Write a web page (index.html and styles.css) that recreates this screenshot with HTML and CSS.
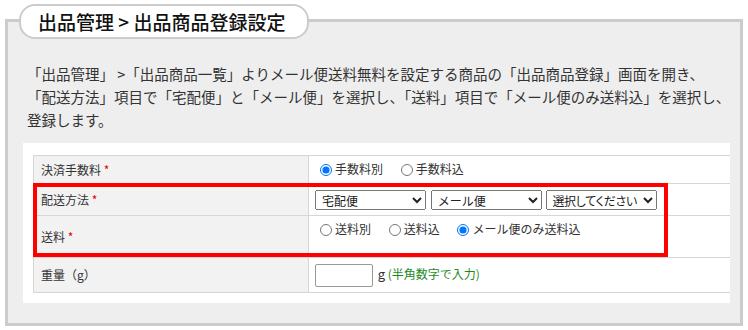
FILE: index.html
```html
<!doctype html>
<html>
<head>
    <meta charset="utf-8">
    <title>出品商品登録設定</title>
    <link rel="stylesheet" href="styles.css">
</head>
<body>
    <div class="frame">
        <h1 class="frame-title">出品管理 &gt; 出品商品登録設定</h1>
        <p class="lead">
            「出品管理」 &gt;「出品商品一覧」よりメール便送料無料を設定する商品の「出品商品登録」画面を開き、<br>
            「配送方法」項目で「宅配便」と「メール便」を選択し、「送料」項目で「メール便のみ送料込」を選択し、<br>
            登録します。
        </p>
        <div class="panel">
            <table class="form-table">
                <tr class="row-fee">
                    <th>決済手数料 <span class="req">*</span></th>
                    <td>
                        <label class="opt"><input type="radio" name="fee" checked>手数料別</label>
                        <label class="opt"><input type="radio" name="fee">手数料込</label>
                    </td>
                </tr>
                <tr class="row-method">
                    <th>配送方法 <span class="req">*</span></th>
                    <td>
                        <select class="pick"><option>宅配便</option></select>
                        <select class="pick"><option>メール便</option></select>
                        <select class="pick pick-tight"><option>選択してください</option></select>
                    </td>
                </tr>
                <tr class="row-postage">
                    <th>送料 <span class="req">*</span></th>
                    <td>
                        <label class="opt"><input type="radio" name="postage">送料別</label>
                        <label class="opt"><input type="radio" name="postage">送料込</label>
                        <label class="opt"><input type="radio" name="postage" checked>メール便のみ送料込</label>
                    </td>
                </tr>
                <tr class="row-weight">
                    <th>重量（g）</th>
                    <td>
                        <input type="text" class="weight-input">
                        <span class="unit">g</span>
                        <span class="note">(半角数字で入力)</span>
                    </td>
                </tr>
            </table>
            <!-- annotation box over the shipping rows -->
            <div class="highlight"></div>
        </div>
    </div>
</body>
</html>
```

FILE: styles.css
```css
body {
    margin: 0;
    background: #fff;
    color: #333;
    font-family: "Noto Sans CJK JP", sans-serif;
}
.frame {
    margin: 19px 5px 0 5px;
    height: 301px;
    background: #eeeeee;
    border: 3px solid #cccccc;
}
.frame-title {
    box-sizing: border-box;
    width: 290px;
    height: 35px;
    margin: -18px 0 0 11px;
    padding-left: 17px;
    background: #fff;
    border: 2px solid #cccccc;
    border-radius: 16px;
    color: #111;
    font-size: 19px;
    font-weight: 500;
    line-height: 31px;
}
.lead {
    margin: 23px 0 0 19px;
    font-size: 14.5px;
    line-height: 23px;
}
.panel {
    position: relative;
    margin: 12px 10px 0 15px;
    padding: 12px 0 10px 10px;
    background: #fff;
}
.form-table {
    width: 100%;
    border-collapse: collapse;
    font-size: 12px;
    line-height: 14px;
}
.form-table th,
.form-table td {
    border: 1px solid #d6d6d6;
}
.form-table td {
    border-right: 0;
    vertical-align: top;
    padding: 6px 0 0 6px;
}
.form-table th {
    width: 267px;
    padding: 0 0 0 7px;
    background: #f2f2f2;
    text-align: left;
    font-weight: normal;
    vertical-align: middle;
}
.row-fee { height: 28px; }
.row-method { height: 32px; }
.row-postage { height: 42px; }
.row-weight { height: 35px; }
.req {
    color: #e60000;
}
.opt {
    margin-right: 10px;
}
.opt input {
    width: 12px;
    height: 12px;
    margin: 0 3px 0 5px;
    vertical-align: -2px;
}
.pick {
    box-sizing: border-box;
    width: 111px;
    height: 20px;
    margin: 0 2px 0 0;
    padding: 0 0 0 2px;
    font-family: inherit;
    font-size: 12px;
    color: #222;
}
.pick-tight {
    padding-left: 1px;
    font-feature-settings: "palt";
    letter-spacing: -0.3px;
}
.weight-input {
    box-sizing: border-box;
    width: 58px;
    height: 23px;
    margin: 0 2px 0 0;
    border: 1px solid #999;
    border-radius: 2px;
    vertical-align: middle;
}
.unit {
    color: #333;
    font-size: 13px;
}
.note {
    color: #1e8a1e;
}
.highlight {
    position: absolute;
    left: 10px;
    top: 40px;
    width: 635px;
    height: 74px;
    box-sizing: border-box;
    border: 4px solid #ff0000;
    pointer-events: none;
}
```
